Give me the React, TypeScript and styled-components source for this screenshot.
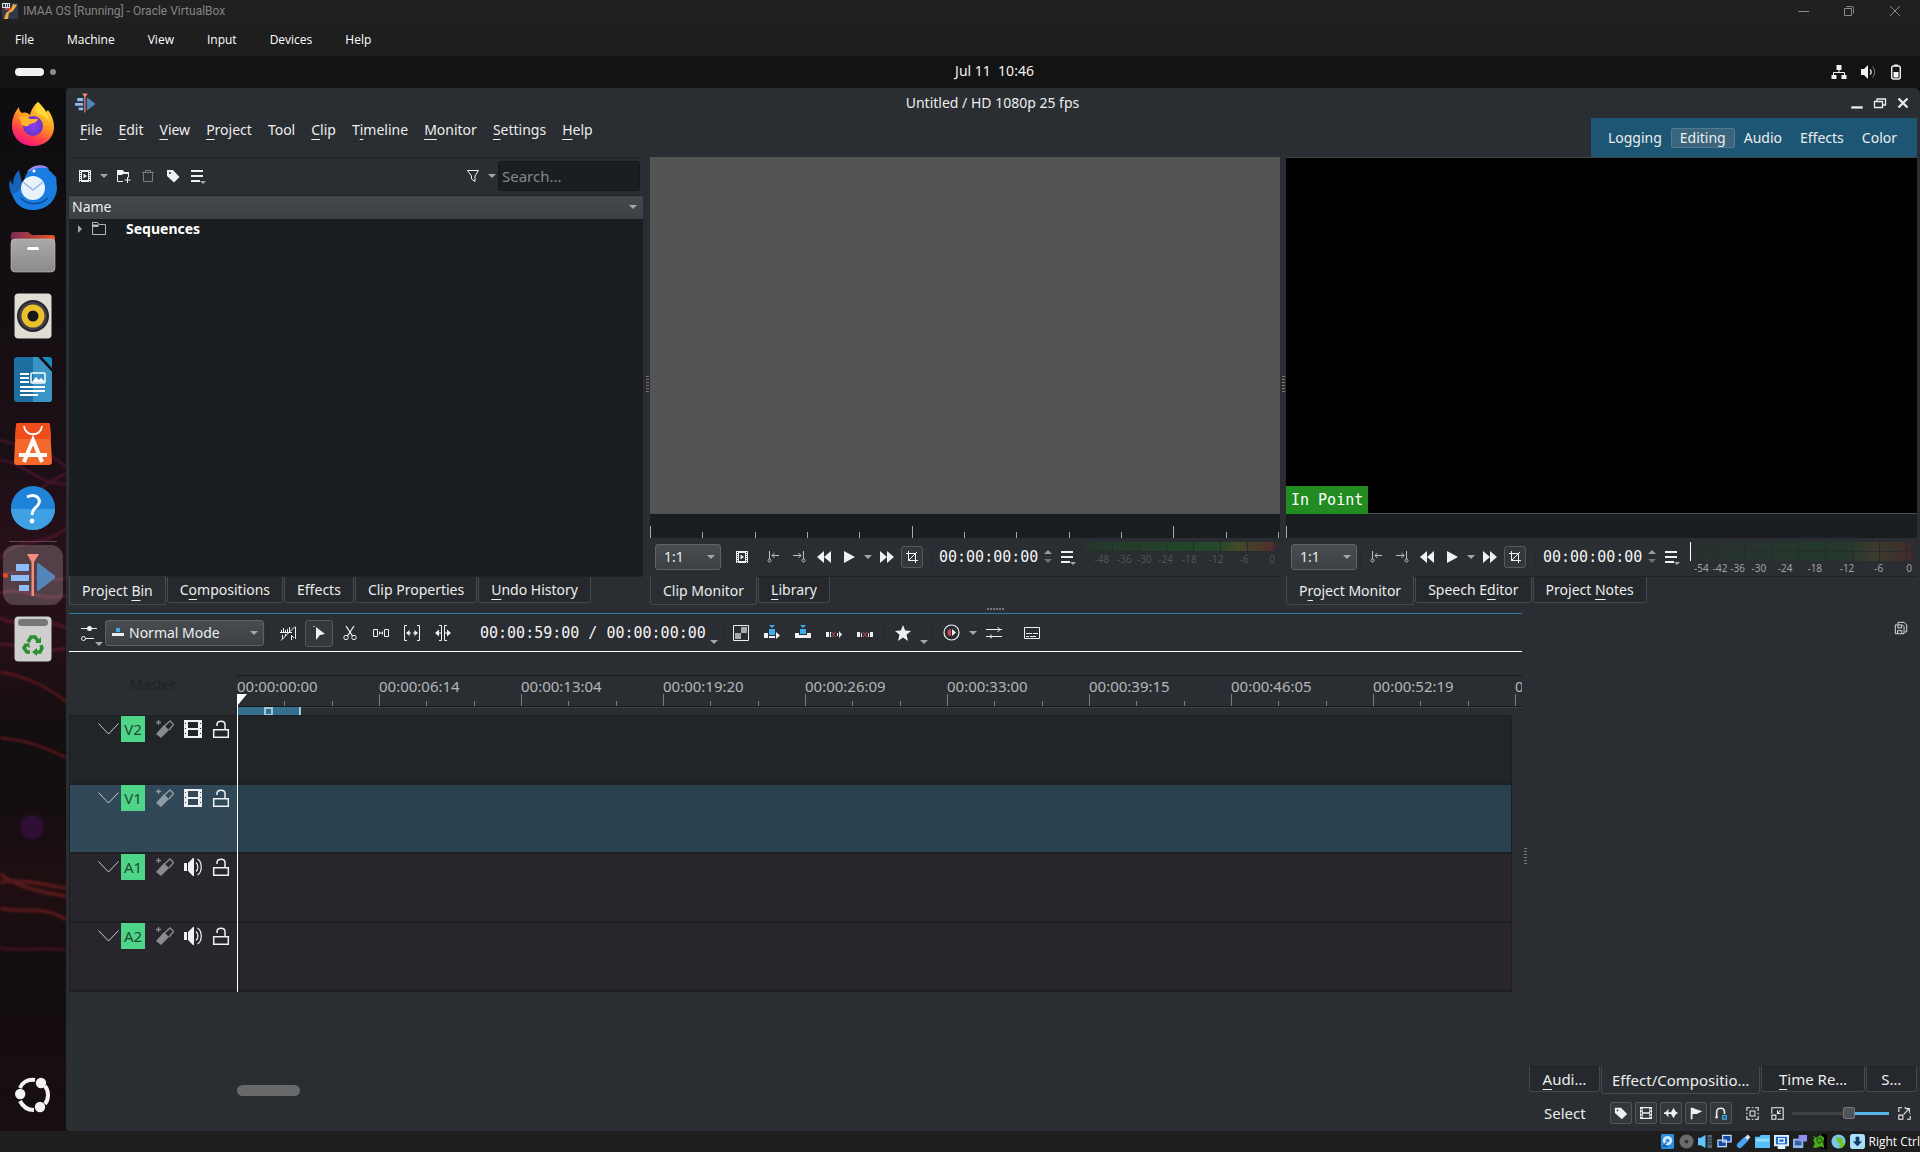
import React from "react";
import styled, { createGlobalStyle, css } from "styled-components";

const ui = `"Noto Sans", "Open Sans", sans-serif`;
const mono = `"DejaVu Sans Mono", "Liberation Mono", monospace`;
const c = {
  win: "#2a2d32",
  base: "#1b1e21",
  text: "#eceded",
  icon: "#eff0f1",
  line: "#1f2226",
  edge: "#4a4e53",
};

const Global = createGlobalStyle`
  * { box-sizing: border-box; }
  html, body { margin: 0; background: #1e1e1e; }
  body { font: 14px/20px ${ui}; color: ${c.text}; overflow: hidden; }
  button, input, select { font: inherit; color: inherit; margin: 0; }
  button { border: 0; padding: 0; background: none; }
  svg { display: block; flex: none; }
`;

/* ---------- shell ---------- */
const Shell = styled.div`
  display: flex;
  flex-direction: column;
  height: 100vh;
`;
const HostTitle = styled.header`
  display: flex;
  align-items: center;
  height: 23px;
  padding: 0 19px 1px 2px;
  gap: 5px;
  background: #202020;
  color: #858585;
  font: 12px/16px Roboto, ${ui};
`;
const HostControls = styled.div`
  display: flex;
  gap: 34px;
  margin-left: auto;
  color: #8a8a8a;
`;
const HostMenu = styled.nav`
  display: flex;
  align-items: center;
  height: 33px;
  gap: 33px;
  padding-left: 15px;
  background: #1e1e1e;
  color: #fff;
  font: 12px/16px "Open Sans", ${ui};
`;
const GnomeBar = styled.div`
  display: flex;
  align-items: center;
  height: 32px;
  background: #131313;
  padding-right: 16px;
`;
const Workspaces = styled.div`
  display: flex;
  align-items: center;
  gap: 6px;
  width: 66px;
  padding-left: 15px;
`;
const Pill = styled.i`
  width: 29px;
  height: 8px;
  border-radius: 4px;
  background: #f2f2f2;
`;
const Dot = styled.i`
  width: 6px;
  height: 6px;
  border-radius: 3px;
  background: #8c8c8c;
`;
const Clock = styled.time`
  flex: 1;
  padding: 0 0 2px 92px;
  text-align: center;
  white-space: pre;
  color: #f2f2f2;
`;
const Tray = styled.div`
  display: flex;
  align-items: center;
  justify-content: space-between;
  width: 73px;
  color: #f2f2f2;
`;
const Body = styled.div`
  flex: 1;
  display: flex;
  min-height: 0;
  background: #130d10;
`;
const StatusBar = styled.footer`
  display: flex;
  align-items: center;
  justify-content: flex-end;
  gap: 4px;
  height: 21px;
  background: #1e1e1e;
  color: #fff;
  font: 12px/16px "Open Sans", ${ui};
  white-space: nowrap;
`;

/* ---------- dock ---------- */
const Dock = styled.aside`
  position: relative;
  display: flex;
  flex-direction: column;
  align-items: center;
  width: 66px;
  padding: 4px 0;
  background: linear-gradient(#0e0d0f, #130e11 20%, #1c0f16 36%, #2a1019 46%, #220f15 54%, #130e0f 62%, #130e10 68%, #1f0e11 77%, #110e11 84%, #180d10 94%, #160e10);
`;
const Wallpaper = styled.svg`
  position: absolute;
  inset: 0;
  filter: blur(1px);
`;
const DockItem = styled.button<{ $active?: boolean }>`
  position: relative;
  display: grid;
  place-items: center;
  width: 60px;
  height: 60px;
  margin: 2px 0;
  border-radius: 12px;
  ${(p) =>
    p.$active &&
    css`
      background: rgba(255, 255, 255, 0.2);
      &::before {
        content: "";
        position: absolute;
        left: 0;
        width: 5px;
        height: 5px;
        border-radius: 3px;
        background: #e2501c;
      }
    `}
`;
const DockRule = styled.hr`
  width: 48px;
  height: 1px;
  margin: 1px 0;
  border: 0;
  background: #5d4a50;
`;
const DockSpacer = styled.div`
  flex: 1;
`;

/* ---------- editor window ---------- */
const Window = styled.main`
  flex: 1;
  min-width: 0;
  display: flex;
  flex-direction: column;
  padding: 0 3px;
  background: ${c.win};
  border-radius: 3px 6px 0 3px;
`;
const Caption = styled.header`
  display: grid;
  grid-template-columns: 1fr auto 1fr;
  align-items: center;
  height: 30px;
  padding: 0 7px 0 6px;
`;
const CaptionButtons = styled.div`
  display: flex;
  justify-content: flex-end;
  gap: 9px;
`;
const MenuRow = styled.div`
  display: flex;
  justify-content: space-between;
  height: 39px;
`;
const Menu = styled.nav`
  display: flex;
  align-items: flex-start;
  padding-left: 3px;
`;
const MenuButton = styled.button`
  height: 24px;
  padding: 1px 8px 0;
  border-bottom: 1px solid #26292d;
`;
const Mnemonic = styled.u`
  text-decoration: underline;
  text-decoration-thickness: 1px;
  text-underline-offset: 4px;
`;
const Layouts = styled.div`
  display: flex;
  align-items: center;
  padding: 0 11px 0 8px;
  background: #1d5674;
`;
const LayoutButton = styled.button<{ $on?: boolean }>`
  height: 20px;
  padding: 0 8px;
  border: 1px solid ${(p) => (p.$on ? "#4f7c93" : "transparent")};
  border-radius: 2px;
  background: ${(p) => (p.$on ? "#3a657c" : "none")};
  line-height: 18px;
`;
const Upper = styled.section`
  flex: 456;
  min-height: 0;
  display: grid;
  grid-template-columns: 575fr 630fr 631fr;
  grid-template-rows: minmax(0, 1fr);
  gap: 6px;
`;
const Lower = styled.section`
  flex: 518;
  min-height: 0;
  display: grid;
  grid-template-columns: 1453fr 388fr;
  grid-template-rows: minmax(0, 1fr);
  gap: 7px;
`;
const Pane = styled.div`
  position: relative;
  display: flex;
  flex-direction: column;
  min-width: 0;
`;
const BinPane = styled(Pane)`
  padding-right: 1px;
`;
const Grip = styled.i<{ $down?: boolean; $top?: string }>`
  position: absolute;
  ${(p) =>
    p.$down
      ? css`bottom: 3px; left: 50%; width: 17px; height: 2px; margin-left: 22px;
          background: repeating-linear-gradient(90deg, #777 0 2px, transparent 2px 3px);`
      : css`top: ${p.$top ?? "50%"}; right: -5px; width: 3px; height: 17px; margin-top: -9px;
          background: repeating-linear-gradient(#777 0 1px, transparent 1px 3px);`}
`;

/* ---------- shared controls ---------- */
const ToolButton = styled.button<{ $w?: number; $dim?: boolean }>`
  position: relative;
  display: grid;
  place-items: center;
  width: ${(p) => p.$w ?? 25}px;
  height: 26px;
  flex: none;
  color: ${(p) => (p.$dim ? "#7b7e81" : c.icon)};
`;
const Framed = styled.span<{ $wide?: boolean }>`
  display: grid;
  place-items: center;
  width: ${(p) => (p.$wide ? 28 : 22)}px;
  height: ${(p) => (p.$wide ? 27 : 22)}px;
  border: 1px solid #55595e;
  border-radius: 3px;
  background: #34383d;
`;
const Arrow = styled.i<{ $w?: number; $low?: boolean }>`
  display: grid;
  place-items: center;
  flex: none;
  width: ${(p) => p.$w ?? 13}px;
  padding-top: ${(p) => (p.$low ? 18 : 0)}px;
  &::after {
    content: "";
    border: 4px solid transparent;
    border-top: 4px solid #a4a6a8;
    border-bottom: 0;
  }
`;
const Sep = styled.i<{ $w: number }>`
  flex: none;
  width: ${(p) => p.$w}px;
  height: 20px;
  background: linear-gradient(#25282c, #25282c) center / 1px 100% no-repeat;
`;
const ComboWrap = styled.label<{ $w: number }>`
  position: relative;
  display: flex;
  align-items: center;
  flex: none;
  width: ${(p) => p.$w}px;
  &::after {
    content: "";
    position: absolute;
    right: 6px;
    border: 4px solid transparent;
    border-top-color: #a4a6a8;
    border-bottom: 0;
  }
  svg { position: absolute; left: 6px; }
`;
const Combo = styled.select<{ $icon?: boolean }>`
  appearance: none;
  width: 100%;
  height: 26px;
  padding: 0 16px 0 ${(p) => (p.$icon ? 23 : 8)}px;
  border: 1px solid #5f6368;
  border-radius: 3px;
  background: linear-gradient(#484c51, #3c4045);
  line-height: 20px;
`;
const Tabs = styled.div`
  display: flex;
  align-items: flex-start;
  gap: 1px;
  height: 37px;
  border-top: 1px solid ${c.line};
`;
const Tab = styled.button<{ $on?: boolean }>`
  flex: none;
  height: ${(p) => (p.$on ? 29 : 26)}px;
  padding: 0 12px;
  margin-top: ${(p) => (p.$on ? -1 : 0)}px;
  border: 1px solid #45494e;
  border-top: 0;
  border-radius: 0 0 3px 3px;
  background: ${(p) => (p.$on ? c.win : "#25282c")};
  line-height: ${(p) => (p.$on ? 30 : 26)}px;
  white-space: nowrap;
`;
const Timecode = styled.output`
  font: 15px/20px ${mono};
  color: #f3f3f3;
  white-space: pre;
`;

/* ---------- bin ---------- */
const BinTools = styled.div`
  display: flex;
  align-items: center;
  height: 38px;
  padding: 0 3px 2px;
  border-top: 1px solid ${c.line};
`;
const Search = styled.input`
  width: 142px;
  height: 30px;
  padding: 0 3px;
  border: 1px solid #17191c;
  border-radius: 3px;
  background: ${c.base};
  font-size: 15px;
  &::placeholder { color: #86888a; opacity: 1; }
`;
const Push = styled.span`
  flex: 1;
`;
const BinBox = styled.div`
  flex: 1;
  background: ${c.base};
`;
const BinTable = styled.table`
  width: 100%;
  border-collapse: collapse;
  th {
    height: 23px;
    padding: 0 6px 0 3px;
    border-top: 1px solid ${c.line};
    background: linear-gradient(#464a4f, #3b3f44);
    font-weight: 400;
    text-align: left;
  }
  td { padding: 0; height: 20px; font-weight: 700; color: #fff; }
`;
const Line = styled.div`
  display: flex;
  align-items: center;
  justify-content: space-between;
`;
const TreeLine = styled.div`
  display: grid;
  grid-template-columns: 14px 35px 1fr;
  align-items: center;
  padding-left: 8px;
`;

/* ---------- monitors ---------- */
const Screen = styled.div<{ $black?: boolean }>`
  flex: 1;
  display: flex;
  align-items: flex-end;
  background: ${(p) => (p.$black ? "#000" : "#545454")};
  border-top: 1px solid ${(p) => (p.$black ? "#454545" : "#545454")};
  box-shadow: inset 0 -1px #4b4d52;
`;
const InPoint = styled.span`
  padding: 4px 5px;
  background: #228b22;
  font: 15px/20px ${mono};
  color: #fff;
`;
const MonRuler = styled.div`
  display: flex;
  align-items: flex-end;
  height: 24px;
  padding-right: 1px;
  background: ${c.base};
`;
const MonTick = styled.i<{ $major?: boolean }>`
  flex: 1;
  height: ${(p) => (p.$major ? 12 : 6)}px;
  border-left: 1px solid #a5a7a9;
`;
const MonEnd = styled.i`
  height: 6px;
  border-left: 1px solid #a5a7a9;
`;
const MonTools = styled.div`
  display: flex;
  align-items: center;
  height: 38px;
  padding: 0 4px 1px 5px;
`;
const Spin = styled.span`
  display: flex;
  flex-direction: column;
  align-items: center;
  gap: 5px;
  width: 20px;
  &::before, &::after { content: ""; border: 4px solid transparent; }
  &::before { border-bottom-color: #9b9da0; border-top: 0; }
  &::after { border-top-color: #6e7174; border-bottom: 0; }
`;
const Meter = styled.div`
  flex: 1;
  display: flex;
  flex-direction: column;
  align-self: flex-start;
  margin: 4px 0 0 8px;
  min-width: 0;
`;
const Bar = styled.div<{ $tall?: boolean }>`
  height: ${(p) => (p.$tall ? 19 : 10)}px;
  border-left: ${(p) => (p.$tall ? "1px solid #fff" : "0")};
  background:
    linear-gradient(transparent 9px, #282c30 9px 10px, transparent 10px),
    repeating-linear-gradient(90deg, transparent 0 26px, #262a2d 26px 27px),
    linear-gradient(90deg, ${(p) =>
      p.$tall
        ? "#29302f, #25382d 50%, #25382d 70%, #3b3b2d 84%, #40292c"
        : "#25362b, #23442b 50%, #234a2b 70%, #454829 80%, #4f2c2d"});
`;
const Scale = styled.div<{ $tall?: boolean }>`
  display: grid;
  grid-template-columns: ${(p) =>
    p.$tall ? "20fr 17fr 18fr 24fr 28fr 31fr 33fr 30fr 18fr" : "26fr 20fr 21fr 23fr 26fr 29fr 29fr 17fr"};
  padding: 0 1px 0 ${(p) => (p.$tall ? 1 : 3)}px;
  color: ${(p) => (p.$tall ? "#a0a2a4" : "#505357")};
  font-size: 10px;
  line-height: 14px;
  text-align: center;
  span:last-child { text-align: right; }
`;

/* ---------- timeline ---------- */
const TimelinePane = styled(Pane)`
  border-top: 1px solid #317ba3;
`;
const TimeTools = styled.div`
  display: flex;
  align-items: center;
  height: 38px;
  padding-left: 4px;
  border-bottom: 1px solid #fff;
`;
const Corner = styled.i`
  position: absolute;
  right: 1px;
  bottom: 0;
  border: 4px solid transparent;
  border-top-color: #a4a6a8;
  border-bottom: 0;
`;
const TimeGrid = styled.div`
  position: relative;
  display: grid;
  grid-template-columns: 168px minmax(0, 1fr);
  margin-top: 23px;
`;
const Master = styled.span`
  color: #1f2225;
  text-align: center;
`;
const Ruler = styled.div`
  position: relative;
  height: 40px;
  border-top: 1px solid #16181a;
  overflow: hidden;
`;
const RulerLabels = styled.div`
  display: flex;
  height: 31px;
  border-bottom: 1px solid #16181a;
  box-shadow: 0 1px #3e4146;
  color: #b4b6b8;
  font-size: 15px;
`;
const RulerCell = styled.div`
  display: flex;
  flex-direction: column;
  flex: none;
  width: 142px;
`;
const Ticks = styled.div`
  display: grid;
  grid-template-columns: repeat(3, 1fr);
  align-items: end;
  height: 12px;
  margin-top: -2px;
  i { height: 5px; border-left: 1px solid #7a7c7f; }
  i:first-child { height: 12px; }
`;
const Zone = styled.div`
  position: relative;
  display: grid;
  place-items: center;
  width: 64px;
  height: 9px;
  border-right: 2px solid #a3c6d8;
  background: #35708f;
  i { width: 9px; height: 9px; border: 2px solid #a3c6d8; }
`;
const Tracks = styled.div`
  grid-column: 1 / -1;
  margin-right: 10px;
  border: 1px solid #1d1f22;
  border-top: 0;
`;
const Track = styled.div<{ $kind: "video" | "active" | "audio" }>`
  display: grid;
  grid-template-columns: 167px minmax(0, 1fr);
  height: 69px;
  border-top: 1px solid #1d2023;
  border-bottom: 1px solid #1d2023;
  background: ${(p) => ({ video: "#212528", active: "#29414f", audio: "#28252c" })[p.$kind]};
`;
const TrackHead = styled.div<{ $active?: boolean }>`
  display: flex;
  align-items: flex-start;
  height: 100%;
  padding-left: 25px;
  color: ${c.icon};
  background: ${(p) => (p.$active ? "#304858" : "none")};
`;
const HeadButton = styled.button<{ $w: number; $dim?: boolean }>`
  display: grid;
  place-items: center;
  width: ${(p) => p.$w}px;
  height: 26px;
  opacity: ${(p) => (p.$dim ? 0.5 : 1)};
`;
const Badge = styled.span`
  width: 24px;
  height: 26px;
  margin-right: 3px;
  background: #4fd588;
  color: #1d4a33;
  font-size: 15px;
  line-height: 26px;
  text-align: center;
`;
const Playhead = styled.div`
  position: absolute;
  left: 168px;
  top: 19px;
  bottom: 0;
  width: 1px;
  background: #fff;
  &::before {
    content: "";
    position: absolute;
    border-top: 12px solid #fff;
    border-right: 10px solid transparent;
  }
`;
const ScrollTrack = styled.div`
  margin: auto 11px 35px 168px;
`;
const ScrollThumb = styled.div`
  width: 63px;
  height: 11px;
  border-radius: 6px;
  background: #67696b;
`;

/* ---------- effect stack ---------- */
const SidePane = styled(Pane)`
  justify-content: space-between;
`;
const SideHead = styled.div`
  display: flex;
  justify-content: flex-end;
  padding: 2px 4px;
`;
const SideTabs = styled(Tabs)`
  height: 29px;
  border: 0;
`;
const SideTab = styled(Tab)<{ $w: number }>`
  flex: ${(p) => p.$w} 1 0;
  height: ${(p) => (p.$on ? 28 : 26)}px;
  padding: 0;
  min-width: 0;
  margin-top: 0;
  border-top: 1px solid ${(p) => (p.$on ? "transparent" : c.line)};
  font-size: 15px;
  line-height: ${(p) => (p.$on ? 26 : 24)}px;
`;
const ToolsRow = styled.div`
  display: flex;
  align-items: center;
  height: 36px;
  padding-left: 15px;
`;
const SelectLabel = styled.span`
  width: 66px;
  font-size: 15px;
`;
const SmallButton = styled.button`
  display: grid;
  place-items: center;
  width: 22px;
  height: 22px;
  margin-right: 3px;
  border: 1px solid #51555a;
  border-radius: 2px;
  background: #34383d;
  color: ${c.icon};
`;
const Slider = styled.input`
  appearance: none;
  flex: 1;
  min-width: 0;
  height: 12px;
  margin: 0 3px 0 2px;
  background: linear-gradient(90deg, #3e4146 0 60%, #57b5ea 60%) center / 100% 3px no-repeat;
  &::-webkit-slider-thumb {
    appearance: none;
    width: 12px;
    height: 12px;
    border: 1px solid #75787c;
    border-radius: 2px;
    background: #505458;
  }
`;

/* ---------- drawings ---------- */
type SvgProps = { s?: number; children: React.ReactNode; box?: number };
const Svg = ({ s = 16, box = 16, children }: SvgProps) => (
  <svg width={s} height={s} viewBox={`0 0 ${box} ${box}`} fill="none" stroke="none" aria-hidden="true">
    {children}
  </svg>
);
const K = "currentColor";

const ClipIcon = () => (
  <Svg><path fill={K} fillRule="evenodd" d="M2 2h12v12H2zM5 4v8h6V4z" /><path stroke="#2a2d32" strokeDasharray="1 1" d="M3.5 3v11M12.500 3v11" /><path fill={K} d="M6.500 5.500 10 8l-3.500 2.500z" /></Svg>
);
const NewFolder = () => (
  <Svg><path stroke={K} d="M8 13.500H2.500v-11h5l1 2h5v5" /><path fill={K} d="M2 2h6l1 2h5v2H8L7 7H2z" /><path stroke={K} d="M12.500 9v6M9.500 12h6" /></Svg>
);
const Trash = () => <Svg><path stroke={K} d="M2 4.500h12M5.500 4V2.500h5V4M3.500 5v8.500h9V5" /></Svg>;
const Tag = () => <Svg><path fill={K} fillRule="evenodd" d="M2 2h6l6.500 7-5.500 5.500L2 8zM5 4a1 1 0 1 0 0 2 1 1 0 0 0 0-2z" /></Svg>;
const Burger = () => <Svg><path fill={K} d="M1 2h12v2H1zM1 7h12v2H1zM1 12h9v2H1z" /><path fill="#a4a6a8" d="M10 13h6l-3 3z" /></Svg>;
const Filter = () => <Svg><path stroke={K} d="M2.500 2.500h11L10 8v5.500L6.500 11V8z" /></Svg>;
const FolderOutline = () => <Svg><path stroke="#b5b7b9" d="M1.500 1.500h5l2 2h6v10h-13z" /><path fill="#b5b7b9" d="M1 3.500h7.500L7 6H1.500z" /></Svg>;
const ZoneIn = () => <Svg><g opacity=".75" stroke={K}><path d="M3.500 2v8M6 6.500h7M8.500 4 6 6.500 8.500 9" /><circle cx="3.500" cy="11.500" r="1.500" /></g></Svg>;
const ZoneOut = () => <Svg><g opacity=".75" stroke={K}><path d="M12.500 2v8M2 6.500h8M7.500 4 10 6.500 7.500 9" /><circle cx="12.500" cy="11.500" r="1.500" /></g></Svg>;
const Rewind = () => <Svg><path fill={K} d="M8 2v12L1 8zM15 2v12L8 8z" /></Svg>;
const Play = () => <Svg><path fill={K} d="M3 2l11 6-11 6z" /></Svg>;
const Forward = () => <Svg><path fill={K} d="M1 2v12L8 8zM8 2v12L15 8z" /></Svg>;
const Crop = () => <Svg><path stroke={K} d="M4.500 2v9.500H14M2 4.500h9.500V14M4 12l9-9" /></Svg>;
const SettingsSliders = () => <Svg s={18} box={18}><path stroke={K} d="M1 4.500h16M6 14.500h8" /><circle cx="9.500" cy="4.500" r="2.500" fill={K} /><circle cx="3.500" cy="14.500" r="2" stroke={K} /></Svg>;
const ModeIcon = () => <Svg s={14} box={14}><path fill="#3daee9" d="M5 2h4v4H5z" /><path fill={K} d="M1 7h12v3H1z" /></Svg>;
const Snap = () => <Svg><path stroke={K} d="M0 7.500h12M1.500 5v3M3.500 3v5M5.500 5v3M7.500 4v4M9.500 2v6M2.500 10v4M5.500 9v2M11.500 10v5M15.500 2v12M11 10l3 3M1 15.500 15 1.500" /></Svg>;
const Pointer = () => <Svg><path fill={K} d="M5 2l9 7-5 1-4 5z" /><path fill="#a4a6a8" d="M2 1h2v1H2z" /></Svg>;
const Scissors = () => <Svg><path stroke={K} strokeWidth="1.300" d="M4 1l6.500 10M12 1 5.500 11" /><circle cx="4" cy="12.500" r="2.200" stroke={K} /><circle cx="12" cy="12.500" r="2.200" stroke={K} /></Svg>;
const Spacer = () => <Svg><path stroke={K} d="M.5 4.500h4v7h-4zM11.500 4.500h4v7h-4zM6 8h4M6.500 6.500v3M9.500 6.500v3" /></Svg>;
const Slip = () => <Svg><path stroke={K} d="M3 .5H.5v15H3M13 .5h2.500v15H13M4 8h3M9 8h3" /><path fill={K} d="M5.500 5v6L2 8zM10.500 5v6L14 8z" /></Svg>;
const Ripple = () => <Svg><path stroke={K} d="M4 .5h2.500v15H4M12 .5H9.500v15H12M3 8h3M10 8h3" /><path fill={K} d="M4 4.500v7L0 8zM12 4.500v7L16 8z" /></Svg>;
const Checker = () => <Svg><path stroke={K} d="M.5.5h15v15H.5z" /><path fill="#a7a9ab" d="M8 2h6v6H8zM2 8h6v6H2z" /></Svg>;
const InsertZone = () => <Svg s={18} box={18}><path fill="#3daee9" d="M6 1h6L9 4zM6 5h6v6H6z" /><path fill={K} d="M1 9h4v5H1zM6 12h6v2H6zM13 8v7l4-3.500z" /></Svg>;
const Overwrite = () => <Svg s={16} box={16}><path fill="#3daee9" d="M5 0h6L8 3zM5 4h6v5H5z" /><path fill={K} d="M0 8h4v2h8V8h4v5H0z" /></Svg>;
const Extract = () => <Svg><path fill={K} d="M0 7h3v5H0zM4 7h1v5H4zM11 8h1v3h-1zM13 6l3 3.500L13 13z" /><path stroke="#da4453" d="M5.500 7l4 5M9.500 7l-4 5" /></Svg>;
const Lift = () => <Svg><path fill={K} d="M0 7h3v5H0zM4 8h1v4H4zM11 8h1v4h-1zM13 7h3v5h-3z" /><path stroke="#da4453" d="M6 7l4 5M10 7l-4 5" /></Svg>;
const Star = () => <Svg><path fill={K} d="M8 0l2.200 5.500L16 6l-4.500 3.800L13 16l-5-3.400L3 16l1.500-6.200L0 6l5.800-.5z" /></Svg>;
const Render = () => <Svg s={17} box={17}><circle cx="8.500" cy="8.500" r="7.500" stroke={K} strokeWidth="1.200" /><path fill="#da4453" d="M8 5v7a3.500 3.500 0 0 1 0-7z" /><path fill={K} d="M9 5l4 3.500L9 12z" /></Svg>;
const Mixer = () => <Svg><path stroke={K} d="M0 4.500h16M0 11.500h16M11.500 2l2.500 2.500L11.500 7M5 9.500v4" /></Svg>;
const Subtitle = () => <Svg><path stroke={K} d="M.5 2.500h15v11H.5zM2 8.500h6M9 8.500h5M2 11.500h3M6 11.500h6" /></Svg>;
const Chevron = () => <svg width="21" height="12" viewBox="0 0 21 12" fill="none" stroke="#c9cbcc"><path d="M.5.500 10.500 11l10-10.500" /></svg>;
const Wand = () => <Svg s={18} box={18}><path fill={K} d="M0 14 8 5l5 5-8 8z" /><path stroke={K} strokeWidth="1.300" d="M8.500 6 14 1l3.500 3.500L13 10M2.500 0v5M0 2.500h5" /></Svg>;
const Film = () => <Svg s={18} box={18}><path fill={K} fillRule="evenodd" d="M0 0h18v18H0zM4 2v6h10V2zM4 10v6h10v-6zM1 3v1h1V3zM1 8v1h1V8zM1 13v1h1v-1zM16 3v1h1V3zM16 8v1h1V8zM16 13v1h1v-1z" /></Svg>;
const Speaker = () => <Svg s={18} box={18}><path fill={K} d="M0 5h3v8H0zM4 5l5-5h1v18H9l-5-5z" /><path stroke={K} strokeWidth="1.200" d="M12 4.500c2.500 2 2.500 7 0 9M13.500 1c5 3 5 13 0 16" /></Svg>;
const Lock = () => <Svg s={18} box={18}><path stroke={K} strokeWidth="1.500" d="M1.700 9.700h14.600v7.500H1.700zM13 9V4.500C13 0 5 0 5 4.500V6" /></Svg>;
const SaveAll = () => <Svg s={14}><path stroke={K} d="M1.500 4.500h8l2 2v8h-10zM4.500 4V1.500h7l3 3v8h-2M4 14v-3h5v3M4.500 5v3h4V5" /></Svg>;
const MiniFilm = () => <Svg s={12} box={18}><path fill={K} fillRule="evenodd" d="M0 0h18v18H0zM4 2v6h10V2zM4 10v6h10v-6zM1 3v2h2V3zM1 8v2h2V8zM1 13v2h2v-2zM15 3v2h2V3zM15 8v2h2V8zM15 13v2h2v-2z" /></Svg>;
const Wave = () => <Svg s={14}><path fill={K} d="M0 7h2l3-4v4h3l3-5 2 4 3 2-3 2-2 4-3-5H5v4L2 9H0z" /></Svg>;
const Flag = () => <Svg s={14}><path fill={K} d="M2 2h2l5 2 6 2-6 3H4v6H2z" /></Svg>;
const Magnet = () => <Svg s={14}><path stroke={K} strokeWidth="1.800" d="M3 14V7c0-6 9-6 9 0v2M1.500 13h3" /><path stroke="#3daee9" strokeWidth="1.500" d="M10 11h4v4h-4z" /></Svg>;
const FitZoom = () => <Svg s={13}><path stroke={K} strokeWidth="1.300" d="M1 5V1h4M11 1h4v4M15 11v4h-4M5 15H1v-4M5 5h6v6H5zM7 1h2M7 15h2M1 7v2M15 7v2" /></Svg>;
const ZoomOut = () => <Svg s={13}><path stroke={K} strokeWidth="1.300" d="M1 8V1h14v14H8M1 10h5v5H1zM12 4 8 8M8 4v4h4" /></Svg>;
const ZoomIn = () => <Svg s={13}><path stroke={K} strokeWidth="1.300" d="M1 6V1h4M8 1h2M15 11v4h-4M1 10h5v5H1zM7 9l6-6M9 2h5v5M15 8v1" /></Svg>;
const Minimize = ({ bold }: { bold?: boolean }) => <Svg s={bold ? 14 : 11} box={11}><path stroke={K} strokeWidth={bold ? 1.800 : 1} d={bold ? "M1 9h9" : "M0 5.500h11"} /></Svg>;

const KdenliveLogo = ({ s }: { s: number }) => (
  <svg width={s} height={s} viewBox="0 0 44 44"><path fill="#8dbcf6" d="M5 11h13v7H5zM0 22h18v6H0zM8 32h10v6H8z" /><path fill="#5485ba" stroke="#5485ba" strokeWidth="2" strokeLinejoin="round" d="M27 11v26l17-13z" /><path fill="#f58d7e" d="M16 1h12l-5 8v34h-2.500V9z" /></svg>
);
const Firefox = () => (
  <svg width="44" height="44" viewBox="0 0 44 44">
    <defs>
      <linearGradient id="ff" x1=".8" y1="0" x2=".3" y2="1"><stop offset="0" stopColor="#ffe63d" /><stop offset=".45" stopColor="#ff9a20" /><stop offset=".75" stopColor="#ff3d4d" /><stop offset="1" stopColor="#f1128b" /></linearGradient>
      <radialGradient id="ffg"><stop offset="0" stopColor="#8a3ff0" /><stop offset="1" stopColor="#6a35c9" /></radialGradient>
    </defs>
    <path fill="url(#ff)" d="M27 0c3 3 6 6 8 10l2-2c4 5 6 11 6 17 0 11-9 19-21 19S1 35 1 24C1 17 3 11 8 5c0 3 1 5 3 6 4-1 6 0 8 2 1-5 4-10 8-13z" />
    <circle cx="22" cy="24" r="10" fill="url(#ffg)" />
    <path fill="#ffb42c" d="M7 16c5-4 9-2 12 1h8c-1 4-5 4-8 5-3 4-7 2-9 0 1-3-1-5-3-6z" />
    <path fill="#ffd83a" d="M27 0c6 6 11 12 11 20-3-5-7-7-11-8-3-4-2-9 0-12z" />
  </svg>
);
const Thunderbird = () => (
  <svg width="48" height="46" viewBox="0 0 48 46">
    <path fill="#1662b9" d="M10 5c2 8 3 14 5 19L6 34C1 29-1 20 1 15l3 5c0-7 2-11 6-15z" />
    <path fill="#1a7ce0" d="M17 10C22-1 36-1 41 6l6 6c1 4 0 7 1 10 0 13-10 23-24 23C12 45 5 38 3 28c6 2 9-5 14-18z" />
    <path fill="#9b8cf2" d="M18 7C24-2 37-1 40 4c-8-3-15 0-22 3z" />
    <circle cx="24" cy="23" r="12" fill="#e8f2fd" /><path stroke="#93b7dd" strokeWidth="1.500" fill="none" d="M14 17l10 8 10-8" />
    <circle cx="25" cy="6" r="1.500" fill="#fff" /><path fill="none" stroke="#0d4b98" strokeWidth="1.500" d="M12 33c6 7 19 8 27 0" />
  </svg>
);
const Files = () => (
  <svg width="46" height="42" viewBox="0 0 46 42"><defs><linearGradient id="fo"><stop stopColor="#7a2a54" /><stop offset="1" stopColor="#e8552a" /></linearGradient><linearGradient id="fg" x2="0" y2="1"><stop stopColor="#aaa" /><stop offset="1" stopColor="#8a8a8a" /></linearGradient></defs><path fill="url(#fo)" d="M1 4q0-3 3-3h14l4 3h20q3 0 3 3v12H1z" /><rect x="1" y="8" width="44" height="33" rx="4" fill="url(#fg)" stroke="#c5c5c5" strokeWidth=".6" /><rect x="17" y="16" width="12" height="3" rx="1.500" fill="#fff" /></svg>
);
const Rhythmbox = () => (
  <svg width="38" height="46" viewBox="0 0 38 46"><rect x=".5" y=".5" width="37" height="45" rx="4" fill="#e2ddd4" /><circle cx="19" cy="23" r="16" fill="#26262c" /><circle cx="19" cy="23" r="14" fill="#3f3f45" /><circle cx="19" cy="23" r="11.500" fill="#ecc02a" /><circle cx="19" cy="23" r="5.500" fill="#17171b" /></svg>
);
const Writer = () => (
  <svg width="38" height="46" viewBox="0 0 38 46"><path fill="#1d6f9f" d="M3 0h21l14 15v27q0 3-3 3H3q-3 0-3-3V3q0-3 3-3z" /><path fill="#47a5d4" d="M19 0h5l14 15v27q0 3-3 3H19z" opacity=".7" /><path fill="#1788c0" d="M28 0h7q3 0 3 3v8z" /><path fill="#fff" d="M6 16h9v2H6zM6 20h9v2H6zM6 24h9v2H6zM6 29h25v2H6zM6 33h25v2H6zM6 37h18v2H6z" /><rect x="17" y="16" width="14" height="10" rx="1" fill="none" stroke="#fff" strokeWidth="1.500" /><path fill="#fff" d="M18 25l4-5 3 3 2-2 4 4z" /></svg>
);
const AppCenter = () => (
  <svg width="38" height="42" viewBox="0 0 38 42"><path fill="#f4692b" d="M4 0h30q2 0 2 2l2 37q0 3-3 3H3q-3 0-3-3L2 2q0-2 2-2z" /><path fill="#ef4e1b" d="M4 0h30q2 0 2 2l1 14H1L2 2q0-2 2-2z" /><path fill="none" stroke="#fff" strokeWidth="1.800" d="M10 3c1 11 17 11 18 0" /><path fill="none" stroke="#fff" strokeWidth="4" d="M10 39l9-22 9 22M5 32h28" /></svg>
);
const HelpIcon = () => (
  <svg width="46" height="46" viewBox="0 0 46 46"><circle cx="23" cy="23" r="22" fill="#1f83d8" /><path fill="#3fa0e3" d="M1 24h44a22 21 0 0 1-44 0z" /><path fill="none" stroke="#fff" strokeWidth="3" d="M17 12c9-4 15 2 11 8-2 3-6 4-6 10" /><circle cx="22" cy="36" r="2.400" fill="#fff" /></svg>
);
const Bin = () => (
  <svg width="38" height="46" viewBox="0 0 38 46"><rect x=".5" y=".5" width="37" height="45" rx="4" fill="#cfcfcf" /><rect x="4" y="3" width="30" height="7" rx="3.500" fill="#777" /><g fill="none" stroke="#2a8f2f" strokeWidth="3.500"><path d="M14 26l3-5h4l3 4M27 29l1 3-2 4h-4M16 36h-3l-3-4 2-3" /></g><g fill="#2a8f2f"><path d="M27 21v6h-6zM23 32v8l-5-4zM9 28l6-1 1 5z" /></g></svg>
);
const UbuntuLogo = () => (
  <svg width="36" height="36" viewBox="0 0 36 36" fill="none" stroke="#f2f2f2" strokeWidth="4"><path d="M20 3C12 2 7 6 5 11M5 24c3 6 8 9 14 9M30 27c4-5 4-13 0-18" /><g fill="#f2f2f2" stroke="none"><circle cx="26" cy="6" r="5.200" /><circle cx="5.200" cy="17" r="5.200" /><circle cx="25" cy="30" r="5.200" /></g></svg>
);
const VBoxLogo = () => <Svg s={16}><path fill="#2e3a4c" d="M0 0h16v16H0z" /><path fill="#f4a742" d="M11 1l4 1-4 6-4 2-1 6H2l2-6 5-4z" /><path fill="#ddd" d="M0 0h8v5H0z" /><path fill="#2e3a4c" d="M1 1h2v3H1zM4 1h1v3H4zM6 1h1v3H6z" /><path fill="#c8473a" d="M3 5h6v2H3z" /></Svg>;
const Net = () => <Svg><path fill={K} d="M5.500 1h5v5h-5zM.5 11h5v4h-5zM10.500 11h5v4h-5z" /><path stroke={K} d="M8 6v3M2.500 11V8.500h11V11" /></Svg>;
const Vol = () => <Svg><path fill={K} d="M1 5h3l4-4v14l-4-4H1z" /><path stroke={K} strokeWidth="1.300" d="M10 5.500c1.500 1 1.500 4 0 5" /><path stroke="#888" d="M12.500 2.500c3 3 3 8 0 11" /></Svg>;
const Battery = () => <Svg><rect x="3.700" y="2" width="8.600" height="13" rx="2" stroke={K} strokeWidth="1.400" /><path fill={K} d="M5.500 8h5v5.500h-5zM6 .5h4V2H6z" /></Svg>;

/* device indicators of the host window */
const deviceIcons: React.ReactNode[] = [
  <><rect x="1" y="0" width="14" height="16" rx="1.500" fill="#2d8de0" /><circle cx="8" cy="7" r="5" fill="#cdeaff" /><circle cx="8" cy="7" r="2" fill="#2d8de0" /><path stroke="#1560a8" strokeWidth="1.500" d="M7 9l-4 4h5" /></>,
  <><circle cx="8" cy="8" r="7.500" fill="#6b6b6b" /><circle cx="8" cy="8" r="2" fill="#333" /></>,
  <><path fill="#62c4ff" d="M0 4h3l5-3v14l-5-3H0z" /><path fill="#566573" d="M10 1h5v14h-5z" /><path stroke="#202a33" d="M10 4.500h5M10 7.500h5M10 10.500h5" /></>,
  <><path fill="#1748a8" stroke="#bde2ff" strokeWidth="1.300" d="M6 1.500h9v7H6zM1 6.500h9v7H1z" /></>,
  <><path stroke="#4aa4ec" strokeWidth="6" strokeLinecap="round" d="M4 12l6-6" /><path stroke="#d7e6f2" strokeWidth="4" d="M11 5l3-3" /></>,
  <><path fill="#58c0f8" d="M0 3h5l1-2h10v14H0z" /><path fill="#8ddcff" d="M1 5h14v3H1z" /></>,
  <><path fill="#dff2ff" d="M0 1h16v12H0zM4 13h8v3H4z" /><path fill="#2468c7" d="M2 3h12v8H2z" /><path stroke="#dff2ff" strokeWidth="1.500" d="M5 5h6v4H5z" /></>,
  <><path fill="#8bb8e8" d="M0 5h11v10H0z" /><path fill="#355aa5" d="M2 7h7v5H2z" /><path fill="#8f8ff0" d="M6 1h9v7H6z" /></>,
  <><path fill="#000" d="M10 0h6v16h-6z" /><path fill="#49a81d" d="M1 2l4 2 4-3 4 3-1 5 1 6-4-2-5 2-3-1 2-4-2-4 2-1z" /><path stroke="#123e07" d="M5 6l4-2 2 4-4 2z" /></>,
  <><circle cx="8" cy="8" r="7.500" fill="#7cc6ee" /><path fill="#72c51e" d="M5 3l8 2-1 3 3 3-4 4-3-2 2-3-3-1z" /></>,
  <><rect width="16" height="16" rx="3" fill="#a9e1fb" /><path fill="#133c66" d="M6 3h4v5h3l-5 5-5-5h3z" /></>,
];

/* ---------- composed parts ---------- */
/** Renders a caption whose accelerator letter is preceded by "&". */
const Accel = ({ t }: { t: string }) => {
  const i = t.indexOf("&");
  if (i < 0) return <>{t}</>;
  return <>{t.slice(0, i)}<Mnemonic>{t[i + 1]}</Mnemonic>{t.slice(i + 2)}</>;
};

const TabRow = ({ items }: { items: string[] }) => (
  <Tabs role="tablist">
    {items.map((t, i) => (
      <Tab key={t} role="tab" aria-selected={i === 0} $on={i === 0}><Accel t={t} /></Tab>
    ))}
  </Tabs>
);

const Monitor = ({ project }: { project?: boolean }) => (
  <Pane>
    <Screen $black={project}>{project && <InPoint>In Point</InPoint>}</Screen>
    <MonRuler>
      {project ? <MonTick $major /> : (
        <>{Array.from({ length: 12 }, (_, i) => <MonTick key={i} $major={i % 5 === 0} />)}<MonEnd /></>
      )}
    </MonRuler>
    <MonTools>
      <ComboWrap $w={66}><Combo aria-label="Zoom level"><option>1:1</option></Combo></ComboWrap>
      {project ? <Sep $w={7} /> : (<><Sep $w={8} /><ToolButton aria-label="Clip"><ClipIcon /></ToolButton><Sep $w={7} /></>)}
      <ToolButton aria-label="Set zone in"><ZoneIn /></ToolButton>
      <ToolButton aria-label="Set zone out"><ZoneOut /></ToolButton>
      <ToolButton aria-label="Rewind"><Rewind /></ToolButton>
      <ToolButton aria-label="Play"><Play /></ToolButton>
      <Arrow />
      <ToolButton aria-label="Forward"><Forward /></ToolButton>
      <ToolButton aria-label="Edit mode"><Framed><Crop /></Framed></ToolButton>
      <Sep $w={project ? 16 : 15} />
      <Timecode>00:00:00:00</Timecode>
      <Spin />
      <ToolButton $w={20} aria-label="Monitor options"><Burger /></ToolButton>
      <Meter>
        <Bar $tall={project} />
        <Scale $tall={project}>
          {(project ? [-54, -42, -36, -30, -24, -18, -12, -6, 0] : [-48, -36, -30, -24, -18, -12, -6, 0]).map((n) => <span key={n}>{n}</span>)}
        </Scale>
      </Meter>
    </MonTools>
    <TabRow items={project ? ["P&roject Monitor", "Speech E&ditor", "Project &Notes"] : ["Clip Monitor", "&Library"]} />
    {!project && <Grip $down />}
    {!project && <Grip />}
  </Pane>
);

const times = ["00:00:00:00", "00:00:06:14", "00:00:13:04", "00:00:19:20", "00:00:26:09", "00:00:33:00", "00:00:39:15", "00:00:46:05", "00:00:52:19", "00:00:59:00"];
const tracks = [
  { name: "V2", kind: "video" as const },
  { name: "V1", kind: "active" as const },
  { name: "A1", kind: "audio" as const },
  { name: "A2", kind: "audio" as const },
];
const T = ({ n, children }: { n: string; children: React.ReactNode }) => <ToolButton $w={31} aria-label={n}>{children}</ToolButton>;

const Timeline = () => (
  <TimelinePane>
    <TimeTools>
      <T n="Track settings"><SettingsSliders /><Corner /></T>
      <Sep $w={1} />
      <ComboWrap $w={159}><ModeIcon /><Combo $icon aria-label="Edit mode"><option>Normal Mode</option></Combo></ComboWrap>
      <Sep $w={8} />
      <T n="Mix clips"><Snap /></T>
      <T n="Selection tool"><Framed $wide><Pointer /></Framed></T>
      <T n="Razor tool"><Scissors /></T>
      <T n="Spacer tool"><Spacer /></T>
      <T n="Slip tool"><Slip /></T>
      <T n="Ripple tool"><Ripple /></T>
      <Sep $w={22} />
      <Timecode>00:00:59:00 / 00:00:00:00</Timecode>
      <Arrow $w={16} $low />
      <Sep $w={4} />
      <T n="Preview zone"><Checker /></T>
      <T n="Insert zone"><InsertZone /></T>
      <T n="Overwrite zone"><Overwrite /></T>
      <T n="Extract zone"><Extract /></T>
      <T n="Lift zone"><Lift /></T>
      <Sep $w={7} />
      <T n="Favorite effects"><Star /></T>
      <Arrow $w={10} $low />
      <Sep $w={7} />
      <T n="Preview render"><Render /></T>
      <Arrow $w={12} />
      <T n="Audio mixer"><Mixer /></T>
      <Sep $w={7} />
      <T n="Subtitles"><Subtitle /></T>
    </TimeTools>
    <TimeGrid>
      <Master>Master</Master>
      <Ruler>
        <RulerLabels>
          {times.map((t) => (
            <RulerCell key={t}>{t}<Ticks><i /><i /><i /></Ticks></RulerCell>
          ))}
        </RulerLabels>
        <Zone><i /></Zone>
      </Ruler>
      <Tracks>
        {tracks.map((t) => (
          <Track key={t.name} $kind={t.kind}>
            <TrackHead $active={t.kind === "active"}>
              <HeadButton $w={26} aria-label="Collapse"><Chevron /></HeadButton>
              <Badge>{t.name}</Badge>
              <HeadButton $w={33} $dim aria-label="Effects"><Wand /></HeadButton>
              <HeadButton $w={24} aria-label="Toggle output">{t.kind === "audio" ? <Speaker /> : <Film />}</HeadButton>
              <HeadButton $w={32} aria-label="Lock track"><Lock /></HeadButton>
            </TrackHead>
          </Track>
        ))}
      </Tracks>
      <Playhead />
    </TimeGrid>
    <ScrollTrack><ScrollThumb /></ScrollTrack>
    <Grip $top="47%" />
  </TimelinePane>
);

const dockApps: [string, React.ReactNode][] = [
  ["Firefox", <Firefox />], ["Thunderbird", <Thunderbird />], ["Files", <Files />], ["Rhythmbox", <Rhythmbox />],
  ["Writer", <Writer />], ["App Center", <AppCenter />], ["Help", <HelpIcon />],
];

export default function App() {
  return (
    <Shell>
      <Global />
      <HostTitle>
        <VBoxLogo />
        <span>IMAA OS [Running] - Oracle VirtualBox</span>
        <HostControls>
          <button aria-label="Minimize"><Minimize /></button>
          <button aria-label="Restore"><Svg s={12} box={12}><path stroke={K} d="M1.500 3.500h7v7h-7zM3.500 1.500h5q2 0 2 2v5" /></Svg></button>
          <button aria-label="Close"><Svg s={12} box={12}><path stroke={K} d="M1 1l10 10M11 1 1 11" /></Svg></button>
        </HostControls>
      </HostTitle>
      <HostMenu>
        {["File", "Machine", "View", "Input", "Devices", "Help"].map((t) => <button key={t}>{t}</button>)}
      </HostMenu>
      <GnomeBar>
        <Workspaces><Pill /><Dot /></Workspaces>
        <Clock>{"Jul 11  10:46"}</Clock>
        <Tray><Net /><Vol /><Battery /></Tray>
      </GnomeBar>
      <Body>
        <Dock>
          <Wallpaper width="66" height="1043" viewBox="0 0 66 1043" fill="none" aria-hidden="true">
            <g stroke="#7a1f4a" opacity=".55">
              <path d="M0 352c20 8 46 6 66 28M0 372c24 2 40 26 66 24M22 420c14-14 20-24 44-34M0 470c20-22 44-10 66-30M0 486c30-6 40 12 66 4" strokeWidth="2" />
            </g>
            <path d="M0 505c20-8 44 10 66 2M0 530c24 12 44-2 66 10M0 556c20 0 50 10 66 4" stroke="#8a2640" strokeWidth="3" opacity=".45" />
            <path d="M0 584c26 4 50 16 66 30M0 650c26 2 48 10 66 20" stroke="#7c1c22" strokeWidth="3" opacity=".6" />
            <path d="M0 786c20 14 40 18 66 22M0 794c26-4 46 4 66 6M0 820c20 6 44-4 66 12" stroke="#8c2424" strokeWidth="4" opacity=".5" />
            <path d="M0 860c24 4 44-2 66 2" stroke="#5a1426" strokeWidth="4" opacity=".5" />
            <circle cx="32" cy="739" r="12" fill="#2f0f36" />
          </Wallpaper>
          {dockApps.map(([n, icon]) => <DockItem key={n} aria-label={n}>{icon}</DockItem>)}
          <DockRule />
          <DockItem $active aria-label="Kdenlive"><KdenliveLogo s={44} /></DockItem>
          <DockItem aria-label="Trash"><Bin /></DockItem>
          <DockSpacer />
          <DockItem aria-label="Show apps"><UbuntuLogo /></DockItem>
        </Dock>
        <Window>
          <Caption>
            <KdenliveLogo s={20} />
            <span>Untitled / HD 1080p 25 fps</span>
            <CaptionButtons>
              <button aria-label="Minimize"><Minimize bold /></button>
              <button aria-label="Restore"><Svg s={14} box={14}><path stroke={K} strokeWidth="1.300" d="M1.500 5.500h8v6h-8zM4 5V3h8.500v6H10" /></Svg></button>
              <button aria-label="Close"><Svg s={14} box={14}><path stroke={K} strokeWidth="2.200" d="M2.500 2.500l9 9M11.500 2.500l-9 9" /></Svg></button>
            </CaptionButtons>
          </Caption>
          <MenuRow>
            <Menu>
              {["&File", "&Edit", "&View", "&Project", "Tool", "&Clip", "T&imeline", "&Monitor", "&Settings", "&Help"].map((t) => (
                <MenuButton key={t}><Accel t={t} /></MenuButton>
              ))}
            </Menu>
            <Layouts>
              {["Logging", "Editing", "Audio", "Effects", "Color"].map((t) => (
                <LayoutButton key={t} $on={t === "Editing"}>{t}</LayoutButton>
              ))}
            </Layouts>
          </MenuRow>
          <Upper>
            <BinPane>
              <BinTools>
                <ToolButton aria-label="Add clip"><ClipIcon /></ToolButton>
                <Arrow />
                <ToolButton aria-label="New folder"><NewFolder /></ToolButton>
                <ToolButton $dim aria-label="Delete"><Trash /></ToolButton>
                <ToolButton aria-label="Tags"><Tag /></ToolButton>
                <ToolButton aria-label="Bin options"><Burger /></ToolButton>
                <Push />
                <ToolButton aria-label="Filter"><Filter /></ToolButton>
                <Arrow />
                <Search placeholder="Search..." aria-label="Search" />
              </BinTools>
              <BinBox>
                <BinTable>
                  <thead><tr><th><Line>Name<Arrow $w={8} /></Line></th></tr></thead>
                  <tbody><tr><td><TreeLine>
                    <svg width="6" height="8" viewBox="0 0 6 8"><path fill="#a4a6a8" d="M1 0l4 4-4 4z" /></svg>
                    <FolderOutline />Sequences
                  </TreeLine></td></tr></tbody>
                </BinTable>
              </BinBox>
              <TabRow items={["Project &Bin", "C&ompositions", "Effects", "Clip Properties", "&Undo History"]} />
              <Grip />
            </BinPane>
            <Monitor />
            <Monitor project />
          </Upper>
          <Lower>
            <Timeline />
            <SidePane>
              <SideHead><ToolButton aria-label="Save effect stack"><SaveAll /></ToolButton></SideHead>
              <div>
                <SideTabs role="tablist">
                  <SideTab role="tab" $w={70}><Accel t="&Audi…" /></SideTab>
                  <SideTab role="tab" $w={160} $on>Effect/Compositio…</SideTab>
                  <SideTab role="tab" $w={103}><Accel t="&Time Re…" /></SideTab>
                  <SideTab role="tab" $w={50}>S…</SideTab>
                </SideTabs>
                <ToolsRow>
                  <SelectLabel>Select</SelectLabel>
                  <SmallButton aria-label="Tags"><Svg s={14}><path fill={K} fillRule="evenodd" d="M1 2h7l7 7-6 6-8-7zM4 4a1 1 0 1 0 0 2 1 1 0 0 0 0-2z" /></Svg></SmallButton>
                  <SmallButton aria-label="Video thumbnails"><MiniFilm /></SmallButton>
                  <SmallButton aria-label="Audio thumbnails"><Wave /></SmallButton>
                  <SmallButton aria-label="Markers"><Flag /></SmallButton>
                  <SmallButton aria-label="Snap"><Magnet /></SmallButton>
                  <Sep $w={5} />
                  <ToolButton aria-label="Fit zoom"><FitZoom /></ToolButton>
                  <ToolButton aria-label="Zoom out"><ZoomOut /></ToolButton>
                  <Slider type="range" min={0} max={100} defaultValue={60} aria-label="Zoom" />
                  <ToolButton aria-label="Zoom in"><ZoomIn /></ToolButton>
                </ToolsRow>
              </div>
            </SidePane>
          </Lower>
        </Window>
      </Body>
      <StatusBar>
        {deviceIcons.map((d, i) => <Svg key={i} s={15}>{d}</Svg>)}
        <span>Right Ctrl</span>
      </StatusBar>
    </Shell>
  );
}
